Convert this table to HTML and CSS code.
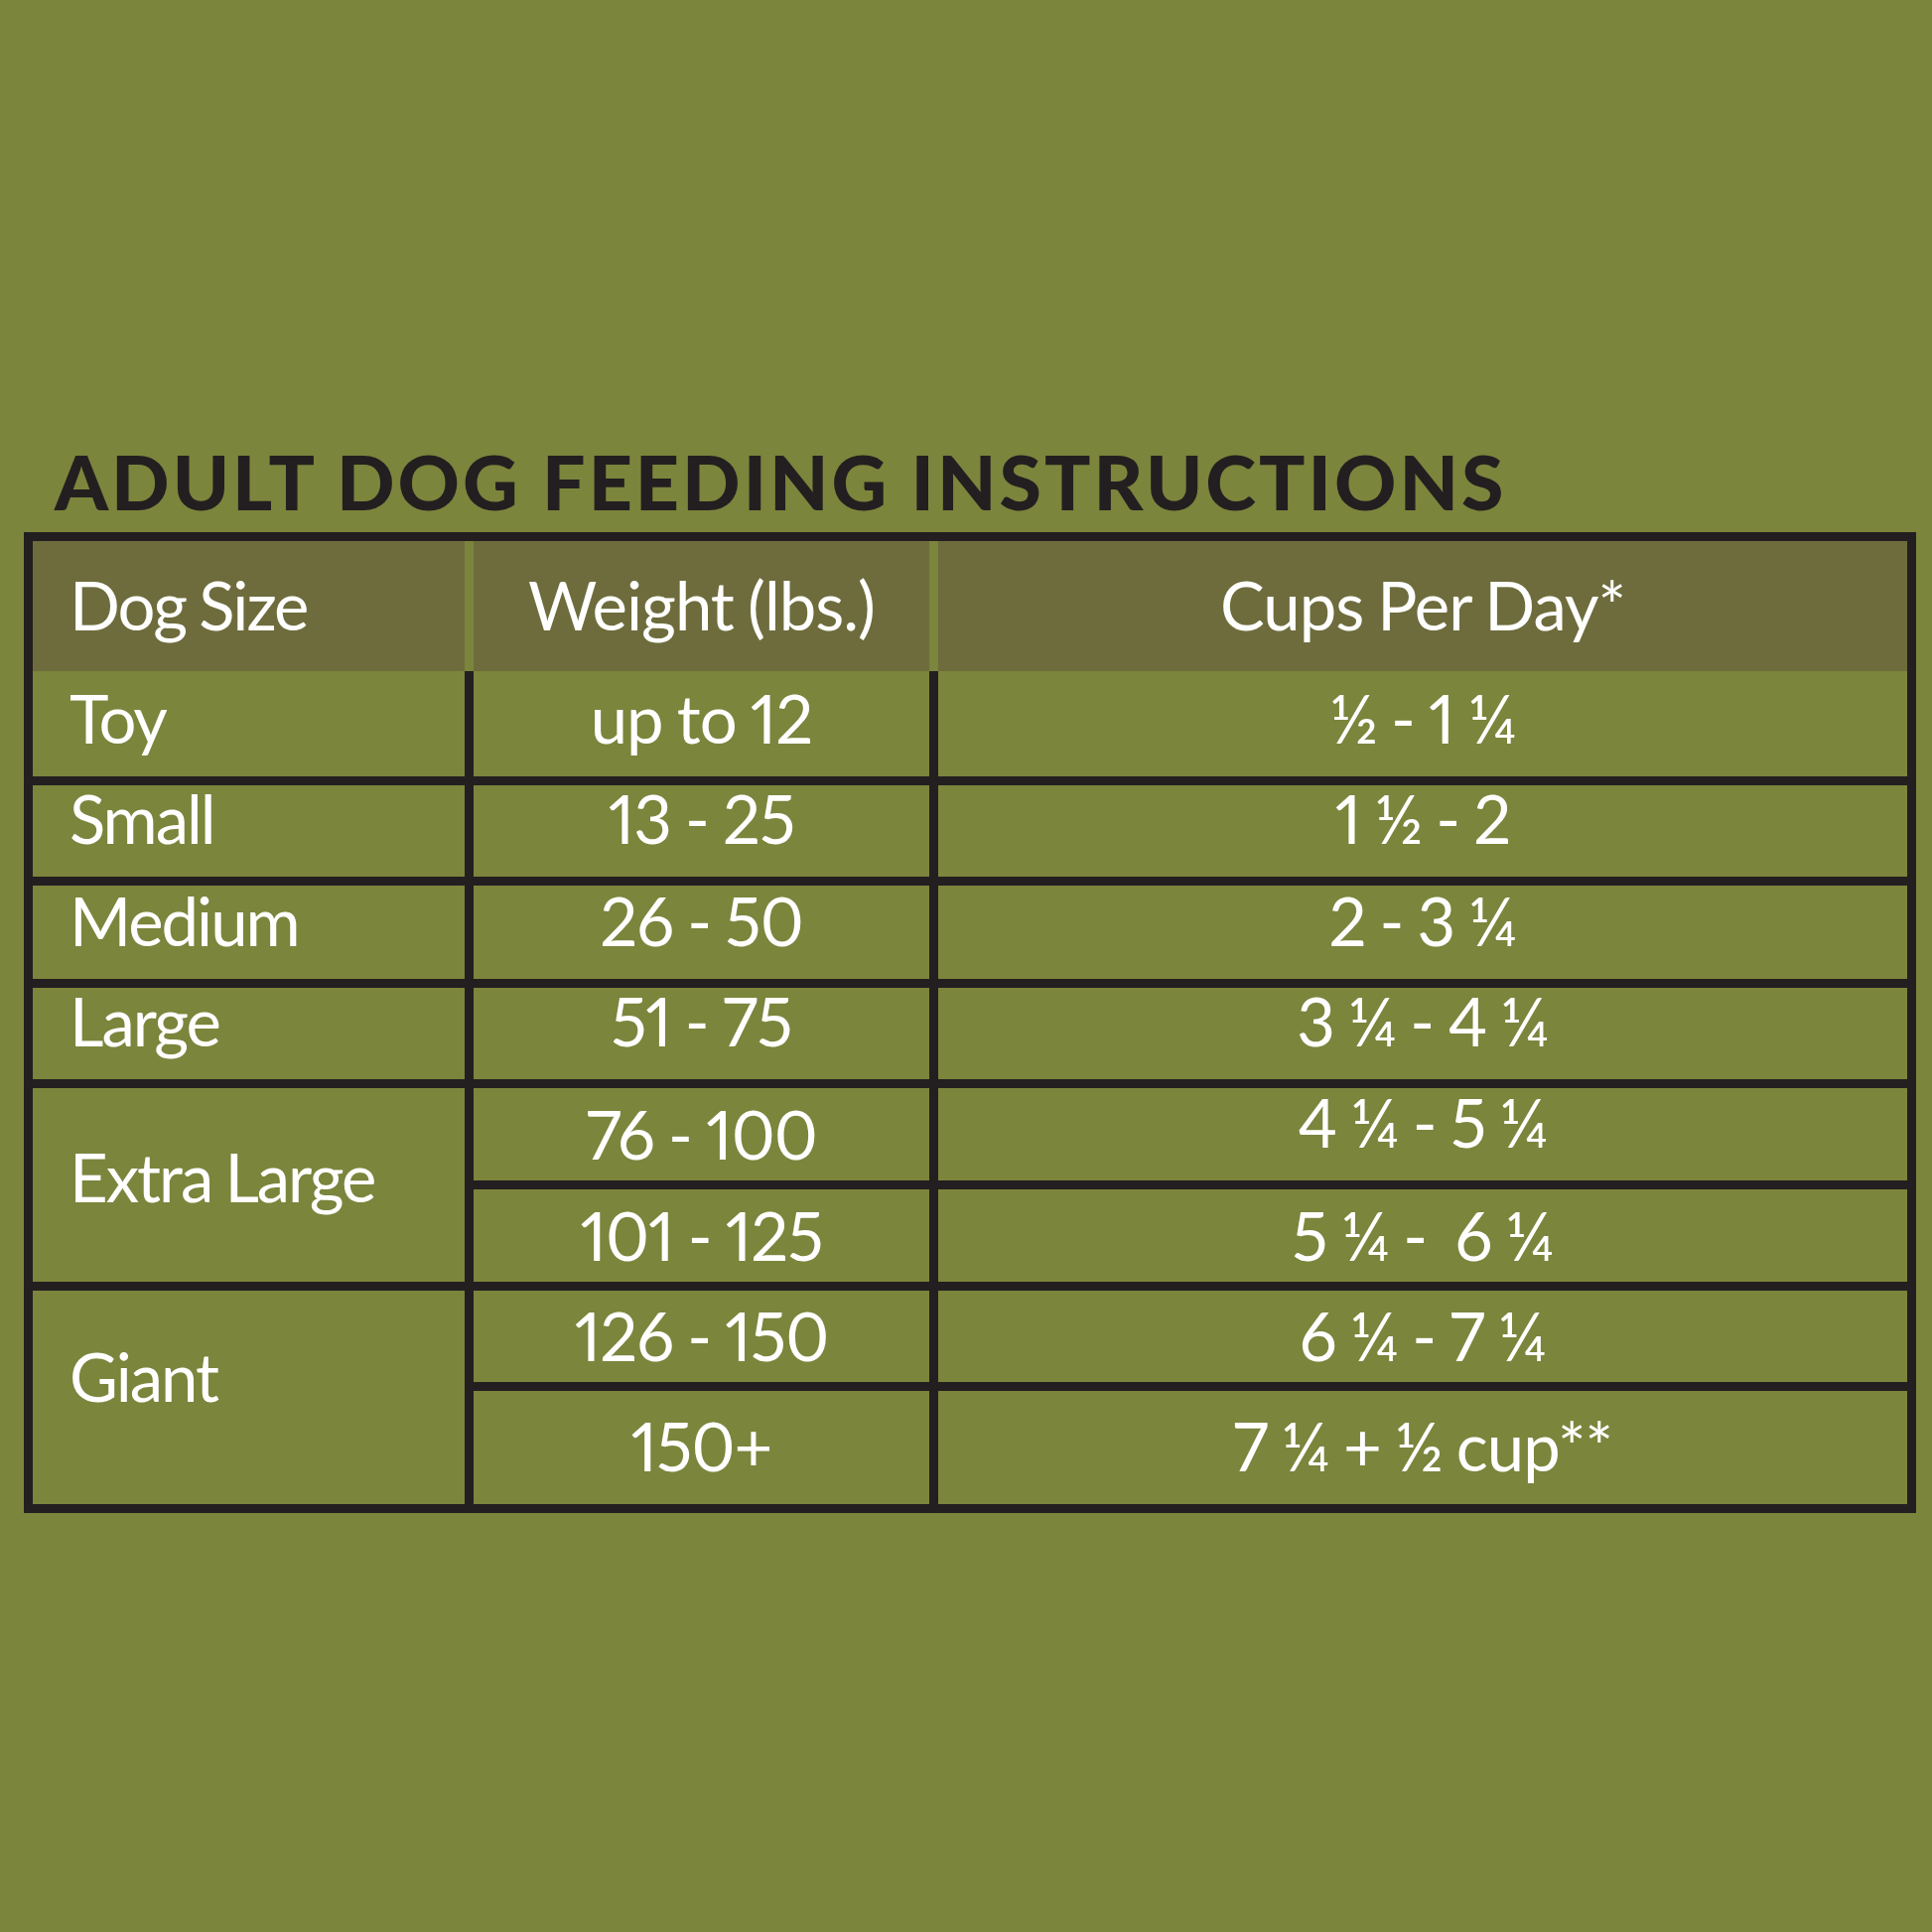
FILE: index.html
```html
<!DOCTYPE html>
<html lang="en">
<head>
<meta charset="utf-8">
<title>Adult Dog Feeding Instructions</title>
<link rel="stylesheet" href="styles.css">
</head>
<body>
<main class="page">
  <h1 class="title">ADULT DOG FEEDING INSTRUCTIONS</h1>
  <section class="chart">
    <div class="head">
      <div class="hcell left">Dog Size</div>
      <div class="hcell">Weight (lbs.)</div>
      <div class="hcell">Cups Per Day*</div>
    </div>
    <div class="body">
      <div class="cell left">Toy</div>
      <div class="cell num">up to 12</div>
      <div class="cell num">½ - 1 ¼</div>

      <div class="cell left">Small</div>
      <div class="cell num">13 - 25</div>
      <div class="cell num">1 ½ - 2</div>

      <div class="cell left">Medium</div>
      <div class="cell num">26 - 50</div>
      <div class="cell num">2 - 3 ¼</div>

      <div class="cell left">Large</div>
      <div class="cell num">51 - 75</div>
      <div class="cell num">3 ¼ - 4 ¼</div>

      <div class="cell left span xl">Extra Large</div>
      <div class="cell num low">76 - 100</div>
      <div class="cell num">4 ¼ - 5 ¼</div>
      <div class="cell num low">101 - 125</div>
      <div class="cell num low">5 ¼ -&nbsp; 6 ¼</div>

      <div class="cell left span giant">Giant</div>
      <div class="cell num low">126 - 150</div>
      <div class="cell num low">6 ¼ - 7 ¼</div>
      <div class="cell num">150+</div>
      <div class="cell num">7 ¼ + ½ cup**</div>
    </div>
  </section>
</main>
</body>
</html>
```
FILE: styles.css
```css
html, body {
  margin: 0;
  padding: 0;
  background: #7b853c;
}

.page {
  width: 1906px;
  padding: 446px 0 0 24px;
}

.title {
  margin: 0 0 13px 31px;
  font-family: "Lato", "Liberation Sans", sans-serif;
  font-weight: 900;
  font-size: 77px;
  line-height: 77px;
  letter-spacing: 3px;
  color: #231f20;
  white-space: nowrap;
}

.chart {
  border: 9px solid #231f20;
  background: #231f20;
  font-family: "Lato", "Noto Sans", sans-serif;
  font-weight: 400;
  font-size: 67px;
  line-height: 67px;
  letter-spacing: -2px;
  word-spacing: -2px;
  font-variant-numeric: proportional-nums;
  color: #ffffff;
}

.head {
  display: grid;
  grid-template-columns: 435px 459px 976px;
  column-gap: 9px;
  height: 131px;
  background: #7b853c;
}

.hcell {
  display: flex;
  align-items: flex-end;
  justify-content: center;
  padding-bottom: 33px;
  background: #6e6c3c;
  white-space: nowrap;
  letter-spacing: -1px;
}

.body {
  display: grid;
  grid-template-columns: 435px 459px 976px;
  grid-template-rows: 106px 92px 94px 92px 93px 93px 92px 114px;
  gap: 9px;
}

.cell {
  display: flex;
  align-items: flex-end;
  justify-content: center;
  padding-bottom: 25px;
  background: #7b853c;
  white-space: nowrap;
}

.cell.num {
  letter-spacing: -1px;
}

.cell.low {
  padding-bottom: 13px;
}

.hcell.left,
.cell.left {
  justify-content: flex-start;
  padding-left: 37px;
  letter-spacing: -2px;
}

.span {
  grid-row: span 2;
}

.xl {
  padding-bottom: 72px;
}

.giant {
  padding-bottom: 95px;
}
```
